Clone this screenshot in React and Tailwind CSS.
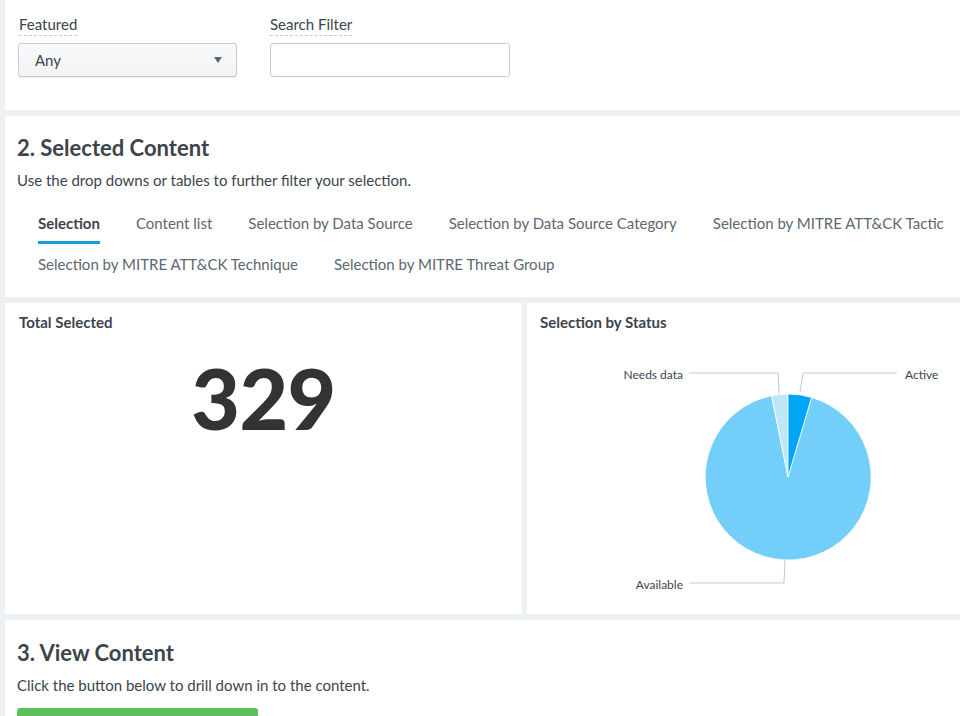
const TABS_ROW_1 = [
  "Selection",
  "Content list",
  "Selection by Data Source",
  "Selection by Data Source Category",
  "Selection by MITRE ATT&CK Tactic",
];
const TABS_ROW_2 = ["Selection by MITRE ATT&CK Technique", "Selection by MITRE Threat Group"];

const font = { fontFamily: "Lato, 'Open Sans', sans-serif" };

const Tab = ({ label, active }) => (
  <div className="px-[18px] flex flex-col items-stretch">
    <div
      className={`h-[41px] flex items-center text-[15px] whitespace-nowrap ${
        active ? "text-[#3c444d] font-bold border-b-[3px] border-[#1a9be0] pt-[3px]" : "text-[#5c6773]"
      }`}
    >
      {label}
    </div>
  </div>
);

const StatusPie = () => (
  <svg width="433" height="270" className="block">
    <path d="M261,138 L284.6,58.4 A83,83 0 1 1 244.6,56.7 Z" fill="#73cffa" stroke="#fff" strokeWidth="0.8" />
    <path d="M261,138 L244.6,56.7 A83,83 0 0 1 261,55 Z" fill="#bde8fb" stroke="#fff" strokeWidth="0.8" />
    <path d="M261,138 L261,55 A83,83 0 0 1 284.6,58.4 Z" fill="#00a5f5" stroke="#fff" strokeWidth="0.8" />

    <polyline points="273,53 276,34 370,34" fill="none" stroke="#c3cbd4" strokeWidth="1" />
    <polyline points="252,55 251,34 162,34" fill="none" stroke="#c3cbd4" strokeWidth="1" />
    <polyline points="258,221 257,244 162,244" fill="none" stroke="#c3cbd4" strokeWidth="1" />

    <text x="378" y="40" fontSize="12" fill="#3c444d" style={font}>Active</text>
    <text x="156" y="40" fontSize="12" fill="#3c444d" textAnchor="end" style={font}>Needs data</text>
    <text x="156" y="250" fontSize="12" fill="#3c444d" textAnchor="end" style={font}>Available</text>
  </svg>
);

export default function App() {
  return (
    <div className="bg-[#eef1f3] min-h-screen pl-[5px] flex flex-col gap-[6px] text-[#3c444d]" style={font}>

      {/* ── Filters ─────────────────────────────────────── */}
      <div className="bg-white h-[110px] px-[13px] pt-[14px] flex gap-[33px]">
        <div className="flex flex-col">
          <div className="self-start text-[15px] leading-[20px] text-[#3c444d] border-b border-dashed border-[#c3cbd4] pb-[1px] ml-[1px]">
            Featured
          </div>
          <div className="mt-[7px] w-[219px] h-[34px] rounded-[3px] border border-[#c3cbd4] bg-gradient-to-b from-[#f9fafb] to-[#f1f3f5] shadow-[0_1px_1px_rgba(0,0,0,0.08)] flex items-center justify-between pl-[16px] pr-[14px]">
            <span className="text-[15px]">Any</span>
            <span className="w-0 h-0 border-l-[4.5px] border-r-[4.5px] border-t-[6px] border-l-transparent border-r-transparent border-t-[#5c6773]" />
          </div>
        </div>
        <div className="flex flex-col">
          <div className="self-start text-[15px] leading-[20px] text-[#3c444d] border-b border-dashed border-[#c3cbd4] pb-[1px]">
            Search Filter
          </div>
          <div className="mt-[7px] w-[240px] h-[34px] rounded-[3px] border border-[#c3cbd4] bg-white" />
        </div>
      </div>

      {/* ── Selected content ────────────────────────────── */}
      <div className="bg-white h-[181px] pt-[19px] pl-[12px]">
        <h2 className="text-[22px] leading-[26px] font-bold text-[#3c444d]">2. Selected Content</h2>
        <p className="mt-[9px] text-[15px] leading-[20px]">Use the drop downs or tables to further filter your selection.</p>
        <div className="mt-[13px] pl-[3px]">
          <div className="flex">
            {TABS_ROW_1.map((t, i) => (
              <Tab key={t} label={t} active={i === 0} />
            ))}
          </div>
          <div className="flex">
            {TABS_ROW_2.map((t) => (
              <Tab key={t} label={t} />
            ))}
          </div>
        </div>
      </div>

      {/* ── Panels ──────────────────────────────────────── */}
      <div className="flex gap-[5px] h-[311px]">
        <div className="bg-white w-[517px] pt-[9px] pl-[14px] flex flex-col">
          <div className="text-[15px] leading-[20px] font-bold">Total Selected</div>
          <div className="flex justify-center pr-[14px] mt-[20px]">
            <span className="text-[84px] leading-[92px] font-black tracking-[-0.5px] text-[#333]">329</span>
          </div>
        </div>
        <div className="bg-white flex-1 pt-[9px] flex flex-col">
          <div className="text-[15px] leading-[20px] font-bold pl-[13px]">Selection by Status</div>
          <div className="mt-[7px]">
            <StatusPie />
          </div>
        </div>
      </div>

      {/* ── View content ────────────────────────────────── */}
      <div className="bg-white flex-1 pt-[20px] pl-[12px]">
        <h2 className="text-[22px] leading-[26px] font-bold">3. View Content</h2>
        <p className="mt-[9px] text-[15px] leading-[20px]">Click the button below to drill down in to the content.</p>
        <div className="mt-[13px] w-[241px] h-[32px] rounded-[3px] bg-[#5cc05c]" />
      </div>
    </div>
  );
}
